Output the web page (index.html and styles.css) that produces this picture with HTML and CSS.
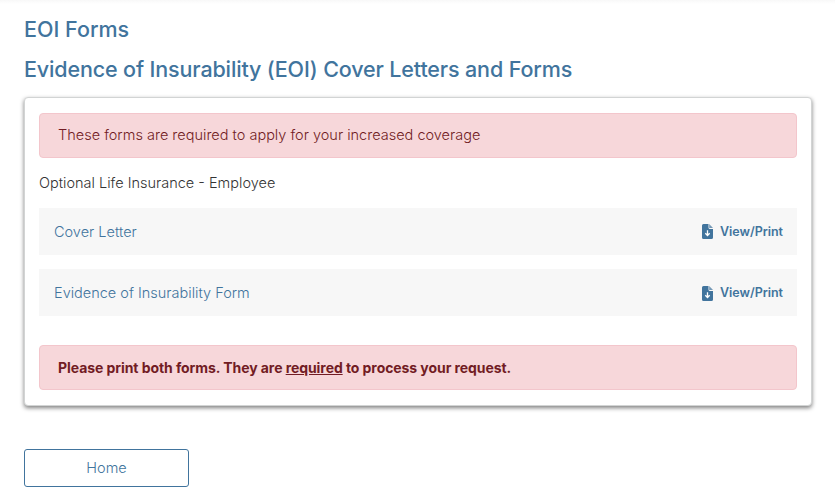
FILE: index.html
```html
<!DOCTYPE html>
<html lang="en">
<head>
<meta charset="utf-8">
<title>EOI Forms</title>
<link rel="stylesheet" href="styles.css">
</head>
<body>
<main class="page">
  <h1 class="heading">EOI Forms</h1>
  <h2 class="heading title-long">Evidence of Insurability (EOI) Cover Letters and Forms</h2>
  <section class="card">
    <div class="alert">These forms are required to apply for your increased coverage</div>
    <p class="plan">Optional Life Insurance - Employee</p>
    <div class="row">
      <span>Cover Letter</span>
      <a class="action"><svg class="icon" viewBox="0 0 11 15"><path d="M1.500 0H6.500v3.500Q6.500 5 8 5H11v8.500Q11 15 9.500 15h-8Q0 15 0 13.500v-12Q0 0 1.500 0Z" fill="#41749d"/><path d="M7.200 0 11 4H7.200Z" fill="#7599b6"/><path d="M5.500 6.200v5.500M3.300 9.300l2.200 2.200 2.200-2.200" fill="none" stroke="#fff" stroke-width="1.300"/></svg><span class="link">View/Print</span></a>
    </div>
    <div class="row">
      <span>Evidence of Insurability Form</span>
      <a class="action"><svg class="icon icon-low" viewBox="0 0 11 15"><path d="M1.500 0H6.500v3.500Q6.500 5 8 5H11v8.500Q11 15 9.500 15h-8Q0 15 0 13.500v-12Q0 0 1.500 0Z" fill="#41749d"/><path d="M7.200 0 11 4H7.200Z" fill="#7599b6"/><path d="M5.500 6.200v5.500M3.300 9.300l2.200 2.200 2.200-2.200" fill="none" stroke="#fff" stroke-width="1.300"/></svg><span class="link">View/Print</span></a>
    </div>
    <div class="alert alert-last">Please print both forms. They are <u>required</u> to process your request.</div>
  </section>
  <button class="home">Home</button>
</main>
</body>
</html>
```
FILE: styles.css
```css
* { box-sizing: border-box; }
body {
  margin: 0;
  min-height: 498px;
  background: linear-gradient(#f8f8f8, #fff 4px);
  font-family: Inter, "Liberation Sans", sans-serif;
  font-size: 14.5px;
  font-weight: 300;
  color: #333;
}
.page { padding: 9px 23px 0 24px; }
.heading {
  margin: 0;
  height: 40px;
  line-height: 40px;
  font-size: 21.5px;
  font-weight: 500;
  color: #41749d;
  white-space: nowrap;
}
.title-long { letter-spacing: -.14px; }
.card {
  height: 309px;
  margin-top: 8px;
  padding: 15px 14px 0;
  border: 1px solid #d2d4d4;
  border-radius: 4px;
  background: #fff;
  box-shadow: 0 2px 4px rgba(0, 0, 0, .5);
}
.alert {
  height: 45px;
  padding: 0 18px;
  border: 1px solid #f3c6cc;
  border-radius: 4px;
  background: #f7d7da;
  color: #721c24;
  line-height: 42px;
  white-space: nowrap;
}
.plan { height: 50px; margin: 0; line-height: 50px; }
.row {
  display: flex;
  justify-content: space-between;
  align-items: center;
  height: 47px;
  margin-bottom: 14px;
  padding: 0 14px 0 15px;
  background: #f7f7f7;
  color: #41749d;
}
.action { display: flex; align-items: center; }
.icon { width: 11px; height: 15px; margin-right: 7px; }
.icon-low { margin-top: 1px; }
.link {
  font-size: 12.5px;
  font-weight: 600;
  letter-spacing: -.03px;
}
.alert-last {
  margin-top: 29px;
  line-height: 44px;
  font-size: 14px;
  font-weight: 700;
  letter-spacing: -.07px;
}
.home {
  display: block;
  width: 165px;
  height: 38px;
  margin-top: 43px;
  padding: 0 0 1px;
  border: 1px solid #41749d;
  border-radius: 3px;
  background: #fff;
  font: inherit;
  color: #41749d;
}
```
